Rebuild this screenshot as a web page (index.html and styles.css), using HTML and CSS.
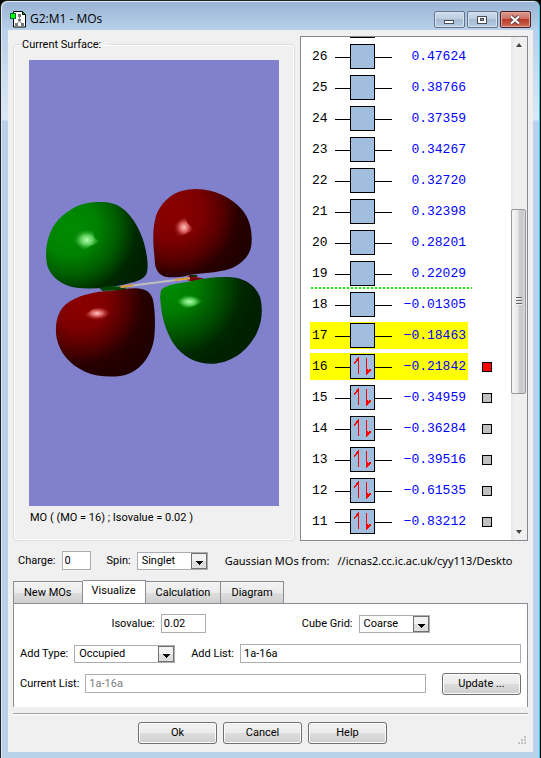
FILE: index.html
```html
<!DOCTYPE html>
<html lang="en">
<head>
<meta charset="utf-8">
<title>G2:M1 - MOs</title>
<link rel="stylesheet" href="styles.css">
</head>
<body>
<svg class="defs" aria-hidden="true">
  <symbol id="level" viewBox="0 0 57 27">
    <path d="M0 14.500h57" stroke="#000"/>
    <rect x="15.500" y="1.500" width="24" height="24" fill="#a2bede" stroke="#000"/>
  </symbol>
  <symbol id="level-pair" viewBox="0 0 57 27">
    <use href="#level" width="57" height="27"/>
    <path d="M23.500 21V4M31.500 5v17" stroke="#f00" fill="none"/>
    <path d="M24 4v4h-2v1h-1v1h-1v1h-1V9h1V8h1V6h1V5h1V4zM31 22v-6h2v1h1v-1h2v2h-1v1h-1v1h-1v1h-1v1z" fill="#f00"/>
  </symbol>
  <symbol id="arrow" viewBox="0 0 16 16">
    <rect x=".5" y=".5" width="15" height="15" fill="#dedede" stroke="#707070"/>
    <path d="M1 1h14v7H1z" fill="#f2f2f2"/>
    <path d="M5 8h7v1h-1v1h-1v1H9v1H8v-1H7v-1H6V9H5z" fill="#000"/>
  </symbol>
</svg>
<div class="window">
  <header class="titlebar">
    <svg class="app-icon" viewBox="0 0 16 17" aria-hidden="true">
      <path d="M3.500.5h9l3 3v12.500h-12z" fill="#fff" stroke="#000"/>
      <path d="M12.500.5v3h3" fill="#0a0" stroke="#000"/>
      <path d="M9.500 5v5l-3 3M9.500 10l3 3" stroke="#888" fill="none"/>
      <path d="M8 3h3v3H8zM8 8h3v2H8zM5 12h3v3H5zM11 12h3v3h-3z" fill="#777"/>
      <rect x=".5" y="2.500" width="5" height="5" fill="#0f0" stroke="#063"/>
    </svg>
    <h1>G2:M1 - MOs</h1>
    <div class="caption-buttons">
      <button type="button" aria-label="Minimize"><svg viewBox="0 0 30 16"><rect x="10.500" y="8.500" width="9" height="3" fill="#fff" stroke="#484c58"/></svg></button>
      <button type="button" aria-label="Maximize"><svg viewBox="0 0 30 16"><rect x="10.500" y="4.500" width="9" height="7" fill="#fff" stroke="#484c58"/><rect x="13.500" y="6.500" width="3" height="2" fill="#9ab" stroke="#484c58"/></svg></button>
      <button type="button" class="close" aria-label="Close"><svg viewBox="0 0 30 16"><path d="M11 4.500l8 7M19 4.500l-8 7" stroke="#60414a" stroke-width="4"/><path d="M11 4.500l8 7M19 4.500l-8 7" stroke="#fff" stroke-width="2"/></svg></button>
    </div>
  </header>
  <main class="client">
    <div class="views">
      <fieldset class="surface">
        <legend>Current Surface:</legend>
        <svg class="scene" viewBox="0 0 250 446" preserveAspectRatio="xMidYMid slice" role="img" aria-label="Molecular orbital">
          <defs>
            <radialGradient id="g1" gradientUnits="userSpaceOnUse" cx="120" cy="175" r="235">
              <stop offset="0" stop-color="#008c00"/><stop offset=".35" stop-color="#008200"/><stop offset=".62" stop-color="#005a00"/><stop offset=".84" stop-color="#002800"/><stop offset="1" stop-color="#002000"/>
            </radialGradient>
            <radialGradient id="g2" gradientUnits="userSpaceOnUse" cx="425" cy="350" r="250">
              <stop offset="0" stop-color="#008a00"/><stop offset=".3" stop-color="#007c00"/><stop offset=".6" stop-color="#005000"/><stop offset=".83" stop-color="#002800"/><stop offset="1" stop-color="#002000"/>
            </radialGradient>
            <radialGradient id="r1" gradientUnits="userSpaceOnUse" cx="430" cy="125" r="245">
              <stop offset="0" stop-color="#8c0000"/><stop offset=".35" stop-color="#7e0000"/><stop offset=".6" stop-color="#560000"/><stop offset=".8" stop-color="#280000"/><stop offset="1" stop-color="#200000"/>
            </radialGradient>
            <radialGradient id="r2" gradientUnits="userSpaceOnUse" cx="150" cy="395" r="235">
              <stop offset="0" stop-color="#8c0000"/><stop offset=".35" stop-color="#7e0000"/><stop offset=".6" stop-color="#520000"/><stop offset=".8" stop-color="#280000"/><stop offset="1" stop-color="#200000"/>
            </radialGradient>
            <radialGradient id="gs" r=".55"><stop offset="0" stop-color="#b4ffb0"/><stop offset=".4" stop-color="#70e070" stop-opacity=".85"/><stop offset="1" stop-color="#008800" stop-opacity="0"/></radialGradient>
            <radialGradient id="rs" r=".55"><stop offset="0" stop-color="#ffc8c8"/><stop offset=".4" stop-color="#e87070" stop-opacity=".85"/><stop offset="1" stop-color="#880000" stop-opacity="0"/></radialGradient>
          </defs>
          <rect x="-500" y="-500" width="1250" height="1446" fill="#8080cc"/>
          <g transform="translate(1 110) scale(.33333)">
            <path d="M206 96C240 95 264 102 288 124C325 160 345 215 351 262C354 285 353 300 350 310C342 332 310 337 280 344C240 352 190 358 145 354C105 350 72 330 56 298C44 270 46 225 60 190C75 150 112 120 150 105Q178 95 206 96Z" fill="url(#g1)"/>
            <path d="M500 57C555 58 605 82 637 120C662 150 668 190 664 225C660 262 625 292 585 301C540 311 500 310 470 317C445 322 415 325 400 318C380 310 374 290 374 265C369 225 368 180 374 155C380 115 410 80 445 66Q470 57 500 57Z" fill="url(#r1)"/>
            <path d="M207 353L240 348L290 352L285 359L218 363Z" fill="#004800"/>
            <path d="M478 316L503 317L498 322L522 325L490 335L468 329Z" fill="#760000"/>
            <path d="M480 315h22v5h-22z" fill="#003800"/>
            <path d="M315 355C350 355 366 370 370 395C376 430 376 470 373 500C366 555 335 600 285 615C250 624 200 620 165 605C120 585 90 550 80 505C74 465 80 430 105 405C140 375 195 364 245 362C270 361 290 355 315 355Z" fill="url(#r2)"/>
            <path d="M395 358C415 342 445 340 475 335C520 325 565 319 605 322C645 326 675 345 690 380C700 420 696 455 680 490C655 540 610 576 555 581C505 584 460 565 430 520C405 480 394 435 391 390Q389 368 395 358Z" fill="url(#g2)"/>
            <path d="M272 351L480 325" stroke="#bdbdbd" stroke-width="6"/>
            <path d="M272 351L310 346M435 330L476 325" stroke="#dc9c30" stroke-width="6"/>
            <path d="M130 202L148 182L187 178L194 204L211 216L182 228L160 242L132 216Z" fill="url(#gs)"/>
            <path d="M432 165L464 140L475 162L492 179L467 192L434 204Z" fill="url(#rs)"/>
            <path d="M161 438L188 416L226 410L241 431L215 450L186 450Z" fill="url(#rs)"/>
            <path d="M438 392L470 374L496 381L518 393L497 407L467 417Z" fill="url(#gs)"/>
          </g>
        </svg>
        <p>MO ( (MO = 16) ; Isovalue = 0.02 )</p>
      </fieldset>
      <section class="orbitals" aria-label="Orbitals">
        <ol class="levels">
          <li><span class="bar"><b></b><svg><use href="#level"/></svg></span></li>
          <li><span class="bar"><b>26</b><svg><use href="#level"/></svg><i>0.47624</i></span></li>
          <li><span class="bar"><b>25</b><svg><use href="#level"/></svg><i>0.38766</i></span></li>
          <li><span class="bar"><b>24</b><svg><use href="#level"/></svg><i>0.37359</i></span></li>
          <li><span class="bar"><b>23</b><svg><use href="#level"/></svg><i>0.34267</i></span></li>
          <li><span class="bar"><b>22</b><svg><use href="#level"/></svg><i>0.32720</i></span></li>
          <li><span class="bar"><b>21</b><svg><use href="#level"/></svg><i>0.32398</i></span></li>
          <li><span class="bar"><b>20</b><svg><use href="#level"/></svg><i>0.28201</i></span></li>
          <li><span class="bar"><b>19</b><svg><use href="#level"/></svg><i>0.22029</i></span></li>
          <li class="divide"><span class="bar"><b>18</b><svg><use href="#level"/></svg><i>−0.01305</i></span></li>
          <li><span class="bar picked"><b>17</b><svg><use href="#level"/></svg><i>−0.18463</i></span></li>
          <li><span class="bar picked"><b>16</b><svg><use href="#level-pair"/></svg><i>−0.21842</i></span><input type="checkbox" aria-label="Show 16" checked></li>
          <li><span class="bar"><b>15</b><svg><use href="#level-pair"/></svg><i>−0.34959</i></span><input type="checkbox" aria-label="Show 15"></li>
          <li><span class="bar"><b>14</b><svg><use href="#level-pair"/></svg><i>−0.36284</i></span><input type="checkbox" aria-label="Show 14"></li>
          <li><span class="bar"><b>13</b><svg><use href="#level-pair"/></svg><i>−0.39516</i></span><input type="checkbox" aria-label="Show 13"></li>
          <li><span class="bar"><b>12</b><svg><use href="#level-pair"/></svg><i>−0.61535</i></span><input type="checkbox" aria-label="Show 12"></li>
          <li><span class="bar"><b>11</b><svg><use href="#level-pair"/></svg><i>−0.83212</i></span><input type="checkbox" aria-label="Show 11"></li>
        </ol>
        <div class="scrollbar" aria-hidden="true">
          <svg viewBox="0 0 16 17"><path d="M5 10l3-4 3 4z" fill="#444"/></svg>
          <div class="track-before"></div>
          <div class="thumb"><span></span><span></span><span></span></div>
          <div class="track-after"></div>
          <svg viewBox="0 0 16 17"><path d="M5 7h6l-3 4z" fill="#444"/></svg>
        </div>
      </section>
    </div>

    <form class="source">
      <label for="charge">Charge:</label>
      <input class="tiny" id="charge" value="0">
      <label class="spin" for="spin">Spin:</label>
      <span class="combo"><select id="spin"><option>Singlet</option></select><svg><use href="#arrow"/></svg></span>
      <p class="path"><span>Gaussian MOs from:</span><span>//icnas2.cc.ic.ac.uk/cyy113/Deskto</span></p>
    </form>

    <nav class="tabs" role="tablist">
      <button type="button" role="tab">New MOs</button>
      <button type="button" role="tab" aria-selected="true">Visualize</button>
      <button type="button" role="tab">Calculation</button>
      <button type="button" role="tab">Diagram</button>
    </nav>
    <form class="panel">
      <div class="row settings">
        <label for="iso">Isovalue:</label>
        <input class="short" id="iso" value="0.02">
        <label class="grid-label" for="grid">Cube Grid:</label>
        <span class="combo"><select id="grid"><option>Coarse</option></select><svg><use href="#arrow"/></svg></span>
      </div>
      <div class="row">
        <label for="type">Add Type:</label>
        <span class="combo wide"><select id="type"><option>Occupied</option></select><svg><use href="#arrow"/></svg></span>
        <label class="list-label" for="list">Add List:</label>
        <input class="grow" id="list" value="1a-16a">
      </div>
      <div class="row">
        <label for="current">Current List:</label>
        <input class="grow" id="current" value="1a-16a" disabled>
        <button type="button" class="push update">Update ...</button>
      </div>
    </form>

    <footer class="actions">
      <button type="button" class="push">Ok</button>
      <button type="button" class="push">Cancel</button>
      <button type="button" class="push">Help</button>
      <svg class="grip" viewBox="0 0 8 8" aria-hidden="true"><path d="M6 0h2v2H6zM3 3h2v2H3zM6 3h2v2H6zM0 6h2v2H0zM3 6h2v2H3zM6 6h2v2H6z" fill="#c0c0c0"/></svg>
    </footer>
  </main>
</div>
</body>
</html>
```
FILE: styles.css
```css
* { box-sizing: border-box; }

body {
  margin: 0;
  background: #000;
  color: #000;
  font: 11px/14px Roboto, "Liberation Sans", Arial, sans-serif;
}

h1, p, ol, fieldset { margin: 0; padding: 0; }
button, input, select { font: inherit; color: inherit; margin: 0; }
label, legend { white-space: nowrap; }
.defs { position: absolute; width: 0; height: 0; }

.window {
  display: flex;
  flex-direction: column;
  min-height: 100vh;
  padding: 0 7px 7px;
  border: 1px solid #222;
  border-right-color: #000;
  border-bottom-color: #000;
  border-radius: 7px 7px 0 0;
  box-shadow: inset -1px -1px #28c8e0, inset 1px 1px #dfeaf6;
  background: linear-gradient(#98b3d3, #b9d1ea 30px, #dde8f5 119px, #b9d1ea 120px);
}

.titlebar { display: flex; align-items: center; height: 29px; padding: 7px 2px 0; }
.titlebar h1 { flex: 1; margin-left: 4px; font: 12px/16px "Open Sans", sans-serif; }
.app-icon { width: 16px; height: 17px; }
.caption-buttons { display: flex; gap: 2px; }
.caption-buttons button {
  width: 31px;
  height: 17px;
  padding: 0;
  border: 1px solid #66758b;
  border-radius: 2px;
  background: linear-gradient(#cfdceb, #bccddf 50%, #a4bbd4 50%, #b7cce2);
  box-shadow: inset 0 0 0 1px #d5e2f0;
}
.caption-buttons svg { display: block; width: 30px; height: 16px; margin: 0 -1px; }
.caption-buttons .close {
  border-color: #4b1c20;
  background: linear-gradient(#dc9c92, #cc6a5c 50%, #b93a2a 50%, #cf6b52);
  box-shadow: inset 0 0 0 1px #dda69c;
}

.client {
  flex: 1;
  display: flex;
  flex-direction: column;
  padding: 6px 5px 8px;
  background: #f0f0f0;
}

.views { flex: 1; display: flex; gap: 5px; }
.surface {
  flex: 1;
  min-width: 0;
  display: flex;
  flex-direction: column;
  padding: 8px 15px 15px;
  border: 1px solid #d5dfe5;
  border-radius: 4px;
  box-shadow: inset 0 0 0 1px #fff;
}
.surface legend { margin-left: -8px; padding: 0 8px 0 1px; height: 16px; line-height: 18px; }
.scene { flex: 1 1 0; display: block; width: 100%; min-height: 0; }
.surface p { padding: 5px 1px 0; }

.orbitals { display: flex; width: 228px; min-height: 505px; border: 1px solid #828790; background: #fff; overflow: hidden; }
.levels {
  flex: 1;
  display: flex;
  flex-direction: column;
  justify-content: flex-end;
  gap: 4px;
  height: 503px;
  padding: 0 0 5px 9px;
  list-style: none;
  font: 13px/27px "Liberation Mono", monospace;
}
.levels li { position: relative; display: flex; flex: none; align-items: center; gap: 14px; height: 27px; }
.levels .bar { display: flex; width: 158px; height: 27px; padding: 0 2px; }
.levels .picked { background: #ff0; }
.levels b { width: 23px; font-weight: 400; }
.levels svg { width: 57px; height: 27px; }
.levels i { flex: 1; font-style: normal; text-align: right; color: #00f; }
.levels input {
  appearance: none;
  width: 10px;
  height: 10px;
  border: 1px solid #000;
  background: #c0c0c0;
}
.levels input:checked { background: #f00; }
.levels .divide::before {
  content: "";
  position: absolute;
  top: -4px;
  left: 1px;
  width: 161px;
  height: 2px;
  background: repeating-linear-gradient(90deg, #0f0 0 2px, #fff 2px 4px);
}

.scrollbar { display: flex; flex-direction: column; width: 16px; background: linear-gradient(90deg, #e6e6e6, #f0f0f0 4px, #efefef); }
.scrollbar svg { width: 16px; height: 17px; }
.track-before { flex: 156; }
.track-after { flex: 130; }
.thumb {
  flex: 184;
  display: flex;
  flex-direction: column;
  align-items: center;
  justify-content: center;
  gap: 1px;
  width: 15px;
  border: 1px solid #979797;
  border-radius: 2px;
  background: linear-gradient(90deg, #f5f5f5, #e8e8ea 45%, #cdcdd2 55%, #c6c6cc 80%, #dadade);
}
.thumb span { width: 6px; height: 2px; background: #666; border-bottom: 1px solid #eee; }

input:not([type]) {
  height: 19px;
  min-width: 0;
  padding: 0 3px;
  border: 1px solid #abadb3;
  border-radius: 0;
  background: #fff;
}
input:disabled { color: #7d7d7d; }
input.tiny { width: 29px; padding: 0 2px; }
input.short { width: 45px; padding: 0 2px; }
input.grow { flex: 1; }

.combo { display: grid; grid-template-columns: 1fr 16px; width: 71px; height: 18px; border: 1px solid #abadb3; background: #fff; }
.combo.wide { width: 101px; }
.combo select {
  grid-area: 1 / 1 / 2 / 3;
  appearance: none;
  width: 100%;
  height: 16px;
  padding: 0 18px 0 4px;
  border: 0;
  background: transparent;
  line-height: 15px;
}
.combo svg { grid-area: 1 / 2; width: 16px; height: 16px; pointer-events: none; }

.source { display: flex; align-items: center; gap: 6px; margin-top: 10px; padding: 0 6px 0 5px; }
.source .spin { margin-left: 10px; }
.path { flex: 1; display: flex; gap: 8px; margin-left: 11px; overflow: hidden; white-space: nowrap; font: 11px/16px "Noto Sans", sans-serif; }

.tabs { display: flex; align-items: flex-end; margin-top: 10px; }
.tabs button {
  height: 22px;
  padding: 0 10px;
  border: 1px solid #898c95;
  border-bottom: 0;
  border-radius: 0;
  background: linear-gradient(#f3f3f3, #ebebeb 50%, #dddddd 50%, #cfcfcf);
}
.tabs button + button { border-left-width: 0; }
.tabs button[aria-selected="true"] { height: 24px; margin-bottom: -1px; padding: 0 9px 3px; background: #fff; }

.panel {
  display: flex;
  flex-direction: column;
  gap: 11px;
  height: 104px;
  padding: 10px 6px;
  border: 1px solid #898c95;
  border-bottom: 0;
  background: #fff;
}
.row { display: flex; align-items: center; gap: 6px; height: 19px; }
.settings { justify-content: center; }
.settings .grid-label { margin-left: 90px; }
.list-label { margin-left: 10px; }

.push {
  width: 79px;
  height: 22px;
  padding: 0;
  border: 1px solid #707070;
  border-radius: 3px;
  background: linear-gradient(#f2f2f2, #ebebeb 50%, #dddddd 50%, #cfcfcf);
  box-shadow: inset 0 0 0 1px #fcfcfc;
}
.update { margin-left: 10px; }

.actions {
  position: relative;
  display: flex;
  justify-content: center;
  gap: 6px;
  margin-top: 6px;
  padding: 8px 16px 0 0;
  border-top: 1px solid #a0a0a0;
  box-shadow: inset 0 1px #fff;
}
.grip { position: absolute; right: 2px; bottom: 0; width: 8px; height: 8px; }
```
